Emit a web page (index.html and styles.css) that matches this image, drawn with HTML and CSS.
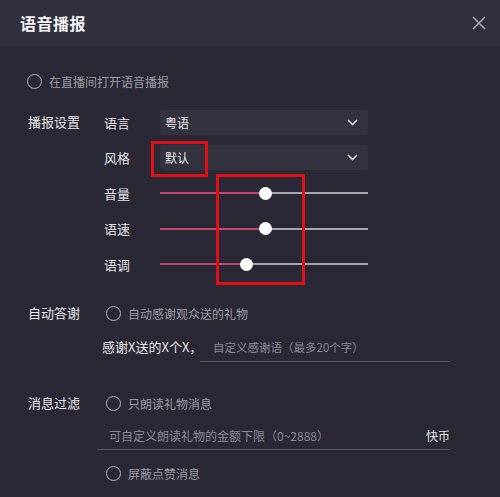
FILE: index.html
```html
<!DOCTYPE html>
<html lang="zh">
<head>
<meta charset="utf-8">
<link rel="stylesheet" href="styles.css">
</head>
<body>
<div class="dialog">
  <div class="header">
    <span class="title">语音播报</span>
    <svg class="close" width="14" height="14" viewBox="0 0 14 14"><path d="M1 1L13 13M13 1L1 13" stroke="#a9a8b2" stroke-width="1.6" fill="none"/></svg>
  </div>
  <div class="content">
    <div class="radio-row first"><span class="radio"></span><span class="rtext">在直播间打开语音播报</span></div>

    <div class="settings">
      <div class="sec-label">播报设置</div>
      <div class="sub">语言</div>
      <div class="ctrl"><div class="select"><span>粤语</span><svg width="11" height="7" viewBox="0 0 11 7"><path d="M1 1L5.5 5.5L10 1" stroke="#d8d8de" stroke-width="1.6" fill="none"/></svg></div></div>
      <div class="sub">风格</div>
      <div class="ctrl"><div class="select"><span>默认</span><svg width="11" height="7" viewBox="0 0 11 7"><path d="M1 1L5.5 5.5L10 1" stroke="#d8d8de" stroke-width="1.6" fill="none"/></svg></div></div>
      <div class="sub">音量</div>
      <div class="ctrl"><div class="slider"><div class="fill" style="width:105px"></div><div class="thumb"></div><div class="rest"></div></div></div>
      <div class="sub">语速</div>
      <div class="ctrl"><div class="slider"><div class="fill" style="width:105px"></div><div class="thumb"></div><div class="rest"></div></div></div>
      <div class="sub">语调</div>
      <div class="ctrl"><div class="slider"><div class="fill" style="width:86px"></div><div class="thumb"></div><div class="rest"></div></div></div>
    </div>

    <div class="section thanks">
      <div class="sec-label">自动答谢</div>
      <div class="sec-body">
        <div class="radio-row"><span class="radio"></span><span class="rtext">自动感谢观众送的礼物</span></div>
        <div class="thanks-row"><span class="thanks-text">感谢X送的X个X，</span><div class="input wide"><span class="ph">自定义感谢语（最多20个字）</span></div></div>
      </div>
    </div>

    <div class="section filter">
      <div class="sec-label">消息过滤</div>
      <div class="sec-body">
        <div class="radio-row"><span class="radio"></span><span class="rtext">只朗读礼物消息</span></div>
        <div class="input amount"><span class="ph">可自定义朗读礼物的金额下限（0~2888）</span><span class="unit">快币</span></div>
        <div class="radio-row last"><span class="radio"></span><span class="rtext">屏蔽点赞消息</span></div>
      </div>
    </div>
  </div>
  <div class="mark mark1"></div>
  <div class="mark mark2"></div>
</div>
</body>
</html>
```

FILE: styles.css
```css
* { box-sizing: border-box; }
html, body { margin: 0; padding: 0; }
body {
  width: 500px;
  height: 497px;
  background: #292834;
  font-family: "Noto Sans CJK SC", "Noto Sans", "Liberation Sans", sans-serif;
  color: #dcdce2;
  overflow: hidden;
}
.dialog { position: relative; width: 500px; height: 497px; background: #292834; }
.header {
  height: 46px;
  background: #31303e;
  display: flex;
  align-items: center;
  justify-content: space-between;
  padding: 0 14px 0 20px;
}
.title { font-size: 16px; font-weight: bold; color: #f4f4f6; margin-top: -1px; letter-spacing: 0.5px; }
.close { margin-top: -1px; }
.content { padding-left: 27px; }
.radio-row { display: flex; align-items: center; height: 20px; }
.radio-row.first { margin-top: 25.5px; }
.radio {
  width: 15px; height: 15px;
  border: 1.5px solid #b4b3bb;
  border-radius: 50%;
  flex: none;
}
.rtext { margin-left: 7px; font-size: 12px; color: #9d9ca5; }
.settings {
  margin-top: 12.75px;
  display: grid;
  grid-template-columns: 77px 56px 208px;
  grid-auto-rows: 35.5px;
  align-items: center;
}
.sec-label { font-size: 13px; color: #e6e6ea; padding-left: 1px; line-height: 20px; }
.settings .sec-label { grid-row: 1; grid-column: 1; }
.sub { grid-column: 2; font-size: 13px; color: #e2e2e6; }
.ctrl { grid-column: 3; }
.select {
  height: 25px;
  background: #33323f;
  border-radius: 3px;
  display: flex;
  align-items: center;
  justify-content: space-between;
  padding: 0 10px 0 5px;
  font-size: 12px;
  color: #e8e8ec;
}
.slider { display: flex; align-items: center; height: 14px; }
.fill { height: 2px; background: #c4466e; flex: none; }
.thumb { width: 13px; height: 13px; border-radius: 50%; background: #ffffff; margin: 0 -6.5px; position: relative; z-index: 1; flex: none; }
.rest { height: 2px; background: #a5a4ac; flex: 1; }
.section { display: grid; grid-template-columns: 75px 1fr; }
.section .sec-label { height: 20px; }
.thanks { margin-top: 21.25px; }
.thanks .radio-row { padding-left: 4px; }
.thanks-row { display: flex; align-items: flex-start; margin-top: 10px; }
.thanks-text { width: 98px; white-space: nowrap; font-size: 13px; color: #e6e6ea; line-height: 28px; }
.input {
  height: 29px;
  border-bottom: 1px solid #54535e;
  display: flex;
  align-items: center;
  justify-content: space-between;
}
.input.wide { width: 250px; padding-left: 13px; }
.ph { font-size: 11.5px; color: #8b8a94; }
.filter { margin-top: 31px; }
.filter .radio-row { padding-left: 4px; }
.input.amount { width: 353px; margin-left: -5px; margin-top: 8px; padding-left: 12px; }
.amount .ph { font-size: 12px; }
.unit { font-size: 12px; color: #e6e6ea; }
.radio-row.last { margin-top: 13.5px; }
.mark { position: absolute; border: 3px solid #df0f18; }
.mark1 { left: 151px; top: 141px; width: 57px; height: 36px; }
.mark2 { left: 216px; top: 174px; width: 89px; height: 111px; }
```
